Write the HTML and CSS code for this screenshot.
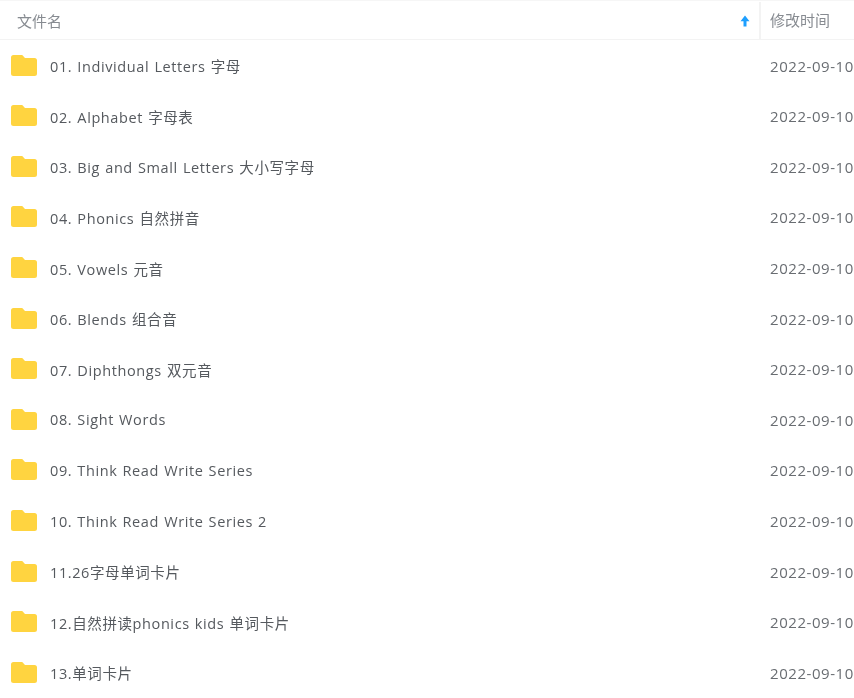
FILE: index.html
```html
<!DOCTYPE html>
<html lang="zh-CN">

<head>
    <meta charset="UTF-8">
    <title>文件列表</title>
    <link rel="stylesheet" href="styles.css">
</head>

<body>
    <div class="fileTable">
        <div class="tableHead">
            <div class="headName">
                <span>文件名</span>
                <svg class="sortArrow" width="10" height="12" viewBox="0 0 10 12"><path d="M5 .5 9.500 6.200H6.500V11.500H3.500V6.200H.5Z" fill="#1e9fff"/></svg>
            </div>
            <div class="headTime">修改时间</div>
        </div>
        <div class="row"><svg class="folder"><use href="#folderIcon"/></svg><span class="name">01. Individual Letters 字母</span><span class="time">2022-09-10</span></div>
        <div class="row"><svg class="folder"><use href="#folderIcon"/></svg><span class="name">02. Alphabet 字母表</span><span class="time">2022-09-10</span></div>
        <div class="row"><svg class="folder"><use href="#folderIcon"/></svg><span class="name">03. Big and Small Letters 大小写字母</span><span class="time">2022-09-10</span></div>
        <div class="row"><svg class="folder"><use href="#folderIcon"/></svg><span class="name">04. Phonics 自然拼音</span><span class="time">2022-09-10</span></div>
        <div class="row"><svg class="folder"><use href="#folderIcon"/></svg><span class="name">05. Vowels 元音</span><span class="time">2022-09-10</span></div>
        <div class="row"><svg class="folder"><use href="#folderIcon"/></svg><span class="name">06. Blends 组合音</span><span class="time">2022-09-10</span></div>
        <div class="row"><svg class="folder"><use href="#folderIcon"/></svg><span class="name">07. Diphthongs 双元音</span><span class="time">2022-09-10</span></div>
        <div class="row"><svg class="folder"><use href="#folderIcon"/></svg><span class="name">08. Sight Words</span><span class="time">2022-09-10</span></div>
        <div class="row"><svg class="folder"><use href="#folderIcon"/></svg><span class="name">09. Think Read Write Series</span><span class="time">2022-09-10</span></div>
        <div class="row"><svg class="folder"><use href="#folderIcon"/></svg><span class="name">10. Think Read Write Series 2</span><span class="time">2022-09-10</span></div>
        <div class="row"><svg class="folder"><use href="#folderIcon"/></svg><span class="name">11.26字母单词卡片</span><span class="time">2022-09-10</span></div>
        <div class="row"><svg class="folder"><use href="#folderIcon"/></svg><span class="name">12.自然拼读phonics kids 单词卡片</span><span class="time">2022-09-10</span></div>
        <div class="row"><svg class="folder"><use href="#folderIcon"/></svg><span class="name">13.单词卡片</span><span class="time">2022-09-10</span></div>
    </div>

    <svg width="0" height="0" class="defs">
        <symbol id="folderIcon" viewBox="0 0 26 21">
            <path d="M2.500 0H10c1.200 0 1.800.5 2.600 1.400L14 3H23.500A2.500 2.500 0 0 1 26 5.500V18.500A2.500 2.500 0 0 1 23.500 21H2.500A2.500 2.500 0 0 1 0 18.500V2.500A2.500 2.500 0 0 1 2.500 0Z" fill="#ffd440"/>
        </symbol>
    </svg>
</body>

</html>
```

FILE: styles.css
```css
body {
    margin: 0;
    background: #fff;
    font-family: "Open Sans", "Noto Sans CJK SC", sans-serif;
    color: #55595e;
    overflow: hidden;
}

.defs {
    position: absolute;
}

/* the reference is a slightly soft upscaled capture */
.fileTable {
    padding-top: 1px;
    border-top: 1px solid #f6f6f6;
    filter: blur(0.35px);
}

.tableHead {
    display: flex;
    height: 37px;
    margin-bottom: 0.4px;
    border-bottom: 1px solid #f3f3f3;
    font-size: 15px;
    color: #878b91;
}

.headName {
    flex: 1;
    display: flex;
    align-items: center;
    justify-content: space-between;
    padding: 0 9px 0 17px;
}

.headTime {
    width: 84px;
    padding-left: 9px;
    line-height: 36px;
    border-left: 2px solid #f3f3f3;
}

.row {
    display: flex;
    align-items: center;
    height: 50.6px;
    padding-left: 11px;
    font-size: 14.5px;
    letter-spacing: 0.6px;
    word-spacing: 0.8px;
}

.folder {
    width: 26px;
    height: 21px;
    margin-right: 13px;
    margin-bottom: 1px;
    flex-shrink: 0;
}

.name {
    flex: 1;
    white-space: nowrap;
}

.time {
    width: 84px;
    white-space: nowrap;
    font-size: 15px;
    letter-spacing: 0.55px;
    color: #696d72;
}
```
